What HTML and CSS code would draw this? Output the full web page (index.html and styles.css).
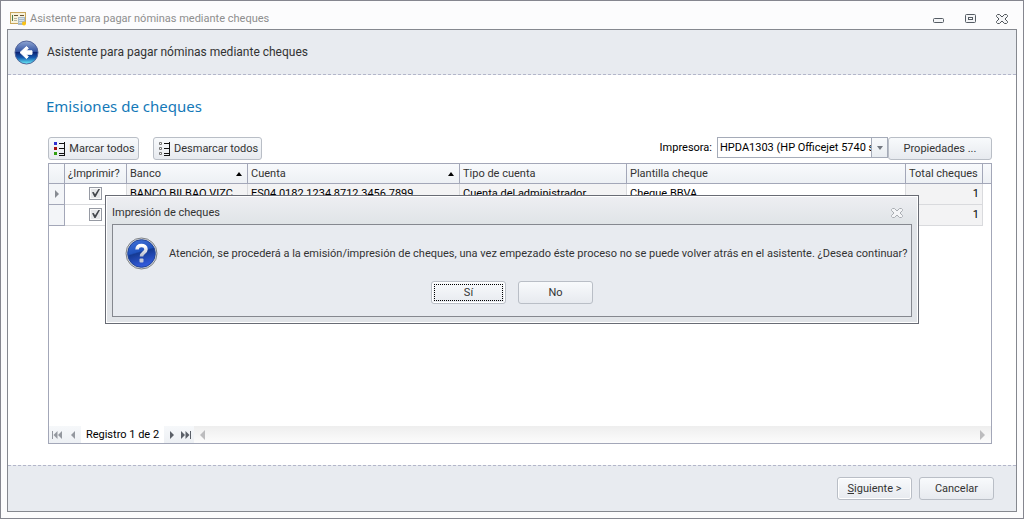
FILE: index.html
```html
<!DOCTYPE html>
<html lang="es">
<head>
<meta charset="utf-8">
<title>Asistente para pagar nóminas mediante cheques</title>
<link rel="stylesheet" href="styles.css">
</head>
<body>
<svg class="defs" width="0" height="0" aria-hidden="true">
  <symbol id="close" viewBox="0 0 12 10">
    <path d="M1.500 .5h2L6 3 8.500 .5h2l1 1v1L9 5l2.500 2.500v1l-1 1h-2L6 7 3.500 9.500h-2l-1-1v-1L3 5 .5 2.500v-1z" fill="#f4f5f7" stroke="currentColor"/>
  </symbol>
</svg>
<div class="window">
  <header class="titlebar">
    <svg class="app-icon" width="17" height="14" viewBox="0 0 17 14">
      <rect x=".5" y=".5" width="15" height="11" fill="#f8f3dc" stroke="#c9a75c"/>
      <path d="M2.500 3v6" stroke="#4f7d4a"/>
      <path d="M4 3.500h4M10 3.500h4" stroke="#6b5433"/>
      <path d="M4 6.500h3M4 8.500h3" stroke="#b9b59b"/>
      <rect x="8" y="5" width="7" height="8" fill="#a9bccb"/>
      <path d="M9 6.500h5M9 8.500h5M9 10.500h3" stroke="#d7e2ea"/>
      <circle cx="14" cy="11.500" r="2" fill="#fbc313"/>
    </svg>
    <span class="titlebar-text">Asistente para pagar nóminas mediante cheques</span>
    <div class="window-controls">
      <button class="ctl" aria-label="Minimizar"><svg width="12" height="10" viewBox="0 0 12 10"><rect x="1.500" y="4.500" width="10" height="4" rx="1" fill="#f4f5f7" stroke="#555c64"/></svg></button>
      <button class="ctl" aria-label="Maximizar"><svg width="12" height="10" viewBox="0 0 12 10"><rect x="1.500" y=".5" width="10" height="8" rx="1" fill="#f4f5f7" stroke="#555c64"/><rect x="4.500" y="3.500" width="4" height="2" fill="#fff" stroke="#555c64"/></svg></button>
      <button class="ctl" aria-label="Cerrar"><svg width="12" height="10"><use href="#close"/></svg></button>
    </div>
  </header>

  <div class="frame">
    <div class="wizard-head">
      <button class="back" aria-label="Atrás">
        <svg width="25" height="25" viewBox="0 0 25 25">
          <defs>
            <linearGradient id="orb" x2="0" y2="1"><stop offset="0" stop-color="#8fa5d2"/><stop offset=".45" stop-color="#3556a4"/><stop offset=".5" stop-color="#0c2474"/><stop offset=".72" stop-color="#155bb0"/><stop offset="1" stop-color="#6df4fb"/></linearGradient>
          </defs>
          <circle cx="12.500" cy="12.500" r="11.500" fill="url(#orb)" stroke="#54659a"/>
          <path d="M6 12.500 12.500 6.500l1.800 1.800L12 10.800h6v3.500h-6l2.300 2.400-1.800 1.900z" fill="#fff" stroke="#fff" stroke-linejoin="round"/>
        </svg>
      </button>
      <h1 class="wizard-title">Asistente para pagar nóminas mediante cheques</h1>
    </div>

    <main class="content">
      <h2 class="page-title">Emisiones de cheques</h2>
      <div class="toolbar">
        <button class="btn btn-icon btn-check">
          <svg width="12" height="14" viewBox="0 0 12 14"><path d="M0 0h3v3H0z" fill="#3030d0"/><path d="M0 5h3v3H0z" fill="#a01010"/><path d="M0 10h3v3H0z" fill="#30a010"/><path d="M5 1.500h5M5 6.500h5M5 11.500h5M5 13.500h6M10.500 0v14" stroke="#111" fill="none"/></svg>
          <span>Marcar todos</span>
        </button>
        <button class="btn btn-icon btn-uncheck">
          <svg width="12" height="14" viewBox="0 0 12 14"><path d="M.5.5h2v2h-2zM.5 5.500h2v2h-2zM.5 10.500h2v2h-2z" fill="#fff" stroke="#777"/><path d="M5 1.500h5M5 6.500h5M5 11.500h5M5 13.500h6M10.500 0v14" stroke="#111" fill="none"/></svg>
          <span>Desmarcar todos</span>
        </button>
        <div class="printer">
          <label for="printer">Impresora:</label>
          <div class="combo">
            <select id="printer"><option>HPDA1303 (HP Officejet 5740 series)</option></select>
            <span class="combo-arrow"></span>
          </div>
          <button class="btn btn-props">Propiedades ...</button>
        </div>
      </div>

      <div class="grid">
        <table>
          <colgroup><col class="c-mark"><col class="c-print"><col class="c-bank"><col class="c-account"><col class="c-type"><col><col class="c-total"><col class="c-end"></colgroup>
          <thead>
            <tr><th></th><th>¿Imprimir?</th><th class="sorted">Banco</th><th class="sorted">Cuenta</th><th>Tipo de cuenta</th><th>Plantilla cheque</th><th>Total cheques</th><th></th></tr>
          </thead>
          <tbody>
            <tr><td class="mark"><span class="tri"></span></td><td class="check"><input type="checkbox" checked aria-label="Imprimir cheque 1"></td><td class="ro">BANCO BILBAO VIZC...</td><td class="ro">ES04 0182 1234 8712 3456 7899</td><td class="ro">Cuenta del administrador</td><td>Cheque BBVA</td><td class="ro num">1</td><td class="end"></td></tr>
            <tr><td class="mark"></td><td class="check"><input type="checkbox" checked aria-label="Imprimir cheque 2"></td><td class="ro"></td><td class="ro"></td><td class="ro"></td><td></td><td class="ro num">1</td><td class="end"></td></tr>
          </tbody>
        </table>
        <div class="navigator">
          <div class="nav-group">
            <button class="nav" aria-label="Primero"><svg width="10" height="8" viewBox="0 0 10 8"><path d="M0 0h1v8H0zM5.500 0v8L1.500 4zM10 0v8L6 4z"/></svg></button>
            <button class="nav" aria-label="Anterior"><svg width="4" height="8" viewBox="0 0 4 8"><path d="M4 0v8L0 4z"/></svg></button>
          </div>
          <span class="record">Registro 1 de 2</span>
          <div class="nav-group active">
            <button class="nav" aria-label="Siguiente"><svg width="4" height="8" viewBox="0 0 4 8"><path d="M0 0v8l4-4z"/></svg></button>
            <button class="nav" aria-label="Último"><svg width="10" height="8" viewBox="0 0 10 8"><path d="M9 0h1v8H9zM4.500 0v8l4-4zM0 0v8l4-4z"/></svg></button>
          </div>
          <div class="scroll">
            <svg width="5" height="10" viewBox="0 0 5 10"><path d="M5 0v10L0 5z"/></svg>
            <svg width="5" height="10" viewBox="0 0 5 10"><path d="M0 0v10l5-5z"/></svg>
          </div>
        </div>
      </div>
    </main>

    <footer class="wizard-foot">
      <button class="btn btn-default btn-std"><span><u>S</u>iguiente &gt;</span></button>
      <button class="btn btn-std">Cancelar</button>
    </footer>
  </div>

  <section class="dialog" role="dialog" aria-labelledby="dlg-title">
    <div class="dialog-head">
      <span id="dlg-title">Impresión de cheques</span>
      <button class="ctl dim" aria-label="Cerrar"><svg width="12" height="10"><use href="#close"/></svg></button>
    </div>
    <div class="dialog-body">
      <div class="message">
        <svg width="33" height="33" viewBox="0 0 33 33">
          <defs>
            <linearGradient id="q" x2=".3" y2="1"><stop offset="0" stop-color="#4273d8"/><stop offset=".5" stop-color="#2154c0"/><stop offset=".55" stop-color="#153a93"/><stop offset="1" stop-color="#3159d8"/></linearGradient>
            <linearGradient id="qm" x2="0" y2="1"><stop offset="0" stop-color="#fff"/><stop offset="1" stop-color="#b9bdcc"/></linearGradient>
          </defs>
          <circle cx="16.500" cy="16.500" r="15.500" fill="#d3d5d8" stroke="#7f8388"/>
          <circle cx="16.500" cy="16.500" r="13.800" fill="url(#q)" stroke="#23469b"/>
          <path d="M12 12.500c.2-3 2-4 4.500-4s4.500 1.400 4.500 3.700c0 3.600-4.500 3.300-4.500 7.300" fill="none" stroke="url(#qm)" stroke-width="3.500"/>
          <rect x="14.500" y="21.500" width="4" height="4" rx="1" fill="#c6cad8"/>
        </svg>
        <p>Atención, se procederá a la emisión/impresión de cheques, una vez empezado éste proceso no se puede volver atrás en el asistente. ¿Desea continuar?</p>
      </div>
      <div class="dialog-actions">
        <button class="btn btn-std btn-default btn-focus">Sí</button>
        <button class="btn btn-std">No</button>
      </div>
    </div>
  </section>
</div>
</body>
</html>
```
FILE: styles.css
```css
* { box-sizing: border-box; }
body { margin: 0; font-family: Tahoma, Roboto, sans-serif; font-size: 11px; line-height: 14px; color: #000; background: #fff; }
button, select, input { font: inherit; margin: 0; }
h1, h2, p { margin: 0; font-weight: 400; }
svg { flex-shrink: 0; }
.defs { position: absolute; }
.window { position: relative; display: flex; flex-direction: column; min-height: 100vh; padding: 0 6px 6px; border: 1px solid #85868f; background: #fcfcfd; }
.titlebar { display: flex; align-items: center; height: 28px; padding: 7px 9px 0 3px; color: #8e8e8e; }
.titlebar-text { margin-left: 3px; }
.window-controls { display: flex; gap: 20px; margin-left: auto; }
.ctl { display: flex; padding: 0; border: 0; background: none; color: #4f5459; }
.ctl.dim { color: #a9adb2; }
.frame { flex: 1; display: flex; flex-direction: column; border: 1px solid #85888f; background: #fff; }

.wizard-head { display: flex; align-items: center; gap: 8px; height: 45px; padding: 0 6px; background: #e8ebf0; border-bottom: 1px dashed #b3b6ca; }
.back { display: flex; padding: 0; border: 0; background: none; }
.wizard-title { font-size: 12px; line-height: 16px; color: #333; }
.content { flex: 1; display: flex; flex-direction: column; padding: 19px 24px 21px 38px; }
.page-title { font-family: "Segoe UI", "Noto Sans", sans-serif; font-size: 15px; line-height: 24px; color: #1479b8; }

.toolbar { display: flex; gap: 14px; margin: 19px 0 0 2px; }
.btn { display: flex; align-items: center; justify-content: center; height: 23px; padding: 0 5px; border: 1px solid #b9bec6; border-radius: 3px; background: linear-gradient(#f8fafc, #e7eaef); color: #333; white-space: nowrap; }
.btn-icon { gap: 3px; padding: 0 3px 0 5px; }
.btn-check { min-width: 91px; }
.btn-uncheck { min-width: 109px; }
.btn-std { width: 75px; }
.btn-default { box-shadow: inset 0 0 0 1px #fff; }
.btn-focus { outline: 1px dotted #000; outline-offset: -4px; }
.btn-props { width: 104px; }
.printer { display: flex; margin-left: auto; }
.printer label { padding: 4px 5px 0 0; }
.combo { display: flex; width: 171px; height: 21px; border: 1px solid #a5abb8; background: #fff; }
.combo select { flex: 1; min-width: 0; padding: 0 0 0 2px; border: 0; appearance: none; background: none; color: #000; text-overflow: clip; }
.combo-arrow { display: flex; align-items: center; justify-content: center; width: 16px; border-left: 1px solid #a5abb8; background: linear-gradient(#f8fafc, #e9edf1); }
.combo-arrow::after { content: ""; border: 3px solid transparent; border-top: 4px solid #737880; border-bottom: 0; }

.grid { flex: 1; display: flex; flex-direction: column; margin: 3px 0 0 2px; border: 1px solid #a3a7b8; }
table { width: 100%; table-layout: fixed; border-collapse: separate; border-spacing: 0; }
.c-mark { width: 16px; }
.c-print { width: 62px; }
.c-bank { width: 121px; }
.c-account { width: 212px; }
.c-type { width: 167px; }
.c-total { width: 77px; }
.c-end { width: 8px; }
th, td { height: 21px; padding: 0 3px; overflow: hidden; white-space: nowrap; text-align: left; font-weight: 400; border-right: 1px solid #d9dadd; border-bottom: 1px solid #d9dadd; }
th { height: 20px; border-color: #a3a7b8; background: linear-gradient(#f8fafc, #edf0f4); color: #333; }
th:last-child { padding: 0; border-right: 0; }
.sorted::after { content: ""; float: right; margin: 5px 2px 0 0; border: 3px solid transparent; border-bottom: 4px solid #000; border-top: 0; }
.mark { border-color: #a3a7b8; background: #f3f5f8; }
.tri { display: block; width: 0; border: 4px solid transparent; border-left-color: #878b92; border-right: 0; margin-left: 3px; }
.check { text-align: center; }
.check input { display: block; margin: 0 auto 1px; width: 13px; height: 13px; appearance: none; border: 1px solid #969aa3; background: #e6e7e9; box-shadow: inset 0 0 0 1px #fafafa; }
.check input:checked::before { content: ""; display: block; width: 8px; height: 8px; margin: 1px 0 0 2px; background: #44474c; clip-path: polygon(0 40%, 22% 38%, 38% 65%, 80% 0, 100% 0, 45% 100%, 30% 100%); }
.ro { background: #f3f3f4; }
.num { text-align: right; }
.end { padding: 0; border: 0; }

.navigator { display: flex; align-items: stretch; height: 17px; margin-top: auto; }
.nav-group { display: flex; align-items: center; justify-content: space-between; width: 32px; padding: 0 6px 0 3px; background: linear-gradient(#f6f8fa, #edf0f4); fill: #94989f; }
.nav-group.active { width: 30px; padding: 0 3px 0 6px; fill: #5b6068; }
.nav { display: flex; padding: 0; border: 0; background: none; }
.record { width: 83px; line-height: 18px; text-align: center; white-space: nowrap; }
.scroll { flex: 1; display: flex; align-items: center; justify-content: space-between; padding: 0 6px; background: linear-gradient(#eee, #fcfcfc); fill: #bcbcbe; }
.wizard-foot { display: flex; align-items: center; justify-content: flex-end; gap: 7px; height: 46px; padding: 0 22px; border-top: 1px dashed #b3b6ca; background: #e8ebf0; }

.dialog { position: absolute; top: 194px; left: 104px; right: 104px; padding: 0 5px 5px; border: 1px solid #686b74; background: #e1e4e8; box-shadow: inset 0 0 0 1px #fff; color: #333; }
.dialog-head { display: flex; align-items: center; justify-content: space-between; height: 27px; margin: 1px -4px 0; padding: 5px 14px 0 5px; background: linear-gradient(#edeef2, #e0e4e7); }
.dialog-body { display: flex; flex-direction: column; gap: 11px; margin: 0 1px 1px; padding: 12px; border: 1px solid #85888f; background: #e8ebf0; }
.message { display: flex; align-items: center; gap: 11px; }
.message p { white-space: nowrap; }
.dialog-actions { display: flex; justify-content: center; gap: 12px; }
```
